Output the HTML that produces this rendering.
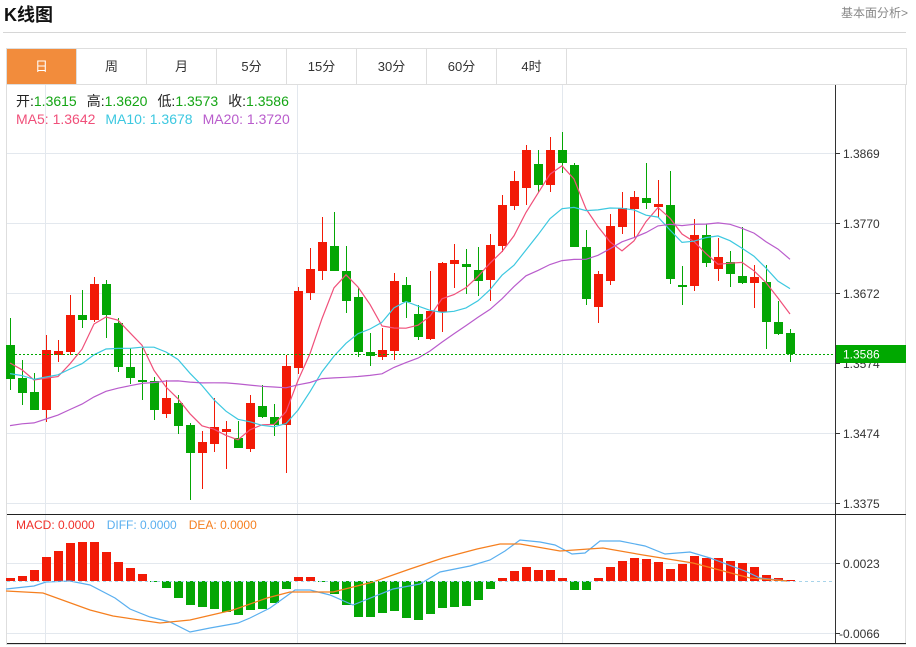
<!DOCTYPE html>
<html><head><meta charset="utf-8"><style>
body{margin:0;width:916px;height:647px;background:#fff;font-family:"Liberation Sans","Noto Sans CJK SC",sans-serif;position:relative;overflow:hidden}
.title{position:absolute;left:4px;top:1px;font-size:18px;font-weight:bold;color:#111}
.more{position:absolute;right:8px;top:4px;font-size:12px;color:#888}
.hr{position:absolute;left:3px;top:32px;width:903px;height:1px;background:#d6d6d6}
.tabs{position:absolute;left:6px;top:48px;width:899px;height:36px;border:1px solid #dedede;border-bottom:none;display:flex}
.tab{width:69px;height:36px;border-right:1px solid #dedede;text-align:center;line-height:36px;font-size:13px;color:#333}
.tab.on{background:#f28c3c;color:#fff}
svg{position:absolute;left:0;top:0}
</style></head><body>
<div class="title">K线图</div>
<div class="more">基本面分析&gt;</div>
<div class="hr"></div>
<div class="tabs"><div class="tab on">日</div><div class="tab">周</div><div class="tab">月</div><div class="tab">5分</div><div class="tab">15分</div><div class="tab">30分</div><div class="tab">60分</div><div class="tab">4时</div></div>
<svg id="c" width="916" height="647" xmlns="http://www.w3.org/2000/svg" font-family="Liberation Sans, Noto Sans CJK SC, sans-serif">
<rect x="6.5" y="84.5" width="899" height="560" fill="none" stroke="#dedede"/>
<g stroke="#e3e8ee" stroke-width="1">
<line x1="7" y1="153.5" x2="835" y2="153.5"/><line x1="7" y1="223.5" x2="835" y2="223.5"/><line x1="7" y1="293.5" x2="835" y2="293.5"/><line x1="7" y1="363.5" x2="835" y2="363.5"/><line x1="7" y1="433.5" x2="835" y2="433.5"/><line x1="7" y1="503.5" x2="835" y2="503.5"/>
<line x1="7" y1="563.5" x2="835" y2="563.5"/><line x1="7" y1="633.5" x2="835" y2="633.5"/>
<line x1="45.5" y1="85" x2="45.5" y2="644"/><line x1="297.5" y1="85" x2="297.5" y2="644"/><line x1="562.5" y1="85" x2="562.5" y2="644"/>
</g>
<g id="cand"></g><g id="ma"></g><g id="macd"></g>
<line x1="7" y1="354.5" x2="835" y2="354.5" stroke="#00a800" stroke-dasharray="2,2"/>
<line x1="7" y1="581.5" x2="835" y2="581.5" stroke="#a8d4ea" stroke-dasharray="3,3"/>
<line x1="835.5" y1="85" x2="835.5" y2="644" stroke="#333"/>
<line x1="7" y1="514.5" x2="906" y2="514.5" stroke="#222"/>
<line x1="7" y1="643.5" x2="906" y2="643.5" stroke="#222"/>
<g stroke="#333"><line x1="836" y1="153.5" x2="840" y2="153.5"/><line x1="836" y1="223.5" x2="840" y2="223.5"/><line x1="836" y1="293.5" x2="840" y2="293.5"/><line x1="836" y1="363.5" x2="840" y2="363.5"/><line x1="836" y1="433.5" x2="840" y2="433.5"/><line x1="836" y1="503.5" x2="840" y2="503.5"/><line x1="836" y1="563.5" x2="840" y2="563.5"/><line x1="836" y1="633.5" x2="840" y2="633.5"/></g>
<g font-size="12" fill="#333">
<text x="843" y="158">1.3869</text><text x="843" y="228">1.3770</text><text x="843" y="298">1.3672</text><text x="843" y="368">1.3574</text><text x="843" y="438">1.3474</text><text x="843" y="508">1.3375</text><text x="843" y="568">0.0023</text><text x="839" y="638">-0.0066</text>
</g>
<rect x="836" y="345" width="70" height="18" fill="#00a800"/>
<text x="843" y="358.5" font-size="12" fill="#fff">1.3586</text>
<g font-size="14">
<text x="16" y="106"><tspan fill="#222">开:</tspan><tspan fill="#14a514">1.3615</tspan><tspan fill="#222" dx="10">高:</tspan><tspan fill="#14a514">1.3620</tspan><tspan fill="#222" dx="10">低:</tspan><tspan fill="#14a514">1.3573</tspan><tspan fill="#222" dx="10">收:</tspan><tspan fill="#14a514">1.3586</tspan></text>
<text x="16" y="124"><tspan fill="#f0507a">MA5: 1.3642</tspan><tspan fill="#3cc8e0" dx="10">MA10: 1.3678</tspan><tspan fill="#b95ccc" dx="10">MA20: 1.3720</tspan></text>
</g>
<text x="16" y="529" font-size="12"><tspan fill="#f0302a">MACD: 0.0000</tspan><tspan fill="#5aafef" dx="12">DIFF: 0.0000</tspan><tspan fill="#f57f1f" dx="12">DEA: 0.0000</tspan></text>
</svg>
<script>
var C=[[345,379,318,390,'G'],[378,393,360,405,'G'],[392,410,373,410,'G'],[350,410,335,422,'R'],[351,355,340,362,'R'],[315,352,295,355,'R'],[315,320,290,328,'G'],[284,320,277,322,'R'],[284,315,280,338,'G'],[323,367,318,372,'G'],[367,378,348,384,'G'],[380,382,348,400,'G'],[381,410,377,420,'G'],[398,414,380,418,'R'],[403,426,395,434,'G'],[425,453,423,500,'G'],[442,453,431,489,'R'],[427,444,398,452,'R'],[429,432,421,469,'R'],[438,448,421,448,'G'],[403,449,395,452,'R'],[406,417,385,418,'G'],[417,425,404,436,'G'],[366,425,355,473,'R'],[291,368,287,374,'R'],[269,293,248,300,'R'],[242,271,217,280,'R'],[246,271,212,271,'G'],[271,301,246,313,'G'],[297,352,288,357,'G'],[352,356,333,366,'G'],[350,357,328,360,'R'],[281,351,273,360,'R'],[285,302,277,318,'G'],[314,337,305,340,'G'],[311,339,271,340,'R'],[263,312,262,332,'R'],[260,264,244,288,'R'],[264,267,249,294,'G'],[270,281,247,296,'G'],[245,280,234,301,'R'],[205,246,195,252,'R'],[181,206,171,210,'R'],[150,188,145,205,'R'],[164,185,150,192,'G'],[150,185,137,192,'R'],[150,163,132,173,'G'],[165,247,163,247,'G'],[247,299,230,305,'G'],[274,307,271,323,'R'],[226,281,214,285,'R'],[208,227,192,234,'R'],[197,209,191,237,'R'],[198,203,163,209,'G'],[204,207,180,217,'R'],[205,279,171,284,'G'],[285,287,266,305,'G'],[235,286,219,291,'R'],[235,263,224,267,'G'],[257,269,238,281,'R'],[262,274,251,287,'G'],[276,283,227,284,'G'],[277,283,265,308,'R'],[282,322,265,349,'G'],[322,334,301,335,'G'],[333,354,329,362,'G']];
var RED='#f21a06',GRN='#04a604',s='';
var closes=[];
C.forEach(function(c,i){var x=10+12*i,col=c[4]=='R'?RED:GRN;
s+='<line x1="'+(x+.5)+'" y1="'+c[2]+'" x2="'+(x+.5)+'" y2="'+c[3]+'" stroke="'+col+'"/>';
s+='<rect x="'+(x-4)+'" y="'+c[0]+'" width="9" height="'+Math.max(2,c[1]-c[0])+'" fill="'+col+'"/>';
closes.push(c[4]=='R'?c[0]:c[1]);});
document.getElementById('cand').innerHTML=s;
function ma(n,pad,col){var pts=[];for(var i=0;i<closes.length;i++){var sum=0;for(var k=i-n+1;k<=i;k++)sum+=k<0?pad:closes[k];pts.push((10+12*i)+','+(sum/n).toFixed(1));}
return '<polyline fill="none" stroke="'+col+'" stroke-width="1.2" points="'+pts.join(' ')+'"/>';}
document.getElementById('ma').innerHTML=ma(5,359,'#f0507a')+ma(10,373,'#3cc8e0')+ma(20,428,'#b95ccc');
var H=[578,576,570,557,551,543,542,542,552,562,568,574,582,588,598,605,607,609,612,615,610,609,603,589,577,577,581,594,605,617,617,613,611,618,620,614,608,607,606,600,589,578,571,567,570,570,578,590,590,578,567,561,558,559,562,569,564,556,558,558,561,563,567,575,578,580];
var m='';H.forEach(function(y,i){var x=10+12*i,z=581;var col=y<z?RED:GRN;var t=Math.min(y,z),h=Math.max(1,Math.abs(y-z));m+='<rect x="'+(x-4)+'" y="'+t+'" width="9" height="'+h+'" fill="'+col+'"/>';});
m+='<polyline fill="none" stroke="#5aafef" stroke-width="1.2" points="6,589 34,586 46,582 70,581 90,585 115,598 130,609 150,617 170,622 190,632 210,628 238,623 250,618 270,608 295,590 310,590 330,595 353,605 393,589 420,584 440,572 470,566 490,560 505,551 520,540 540,542 555,545 572,554 585,553 600,541 620,541 645,546 665,554 690,552 710,558 745,571 760,578 787,581"/>';
m+='<polyline fill="none" stroke="#f57f1f" stroke-width="1.2" points="6,591 43,593 90,610 113,616 160,623 190,620 233,610 267,598 290,592 333,592 373,582 410,569 443,558 477,549 500,544 520,544 560,551 603,548 643,555 693,563 727,572 750,578 787,581"/>';
document.getElementById('macd').innerHTML=m;
</script>
</body></html>
